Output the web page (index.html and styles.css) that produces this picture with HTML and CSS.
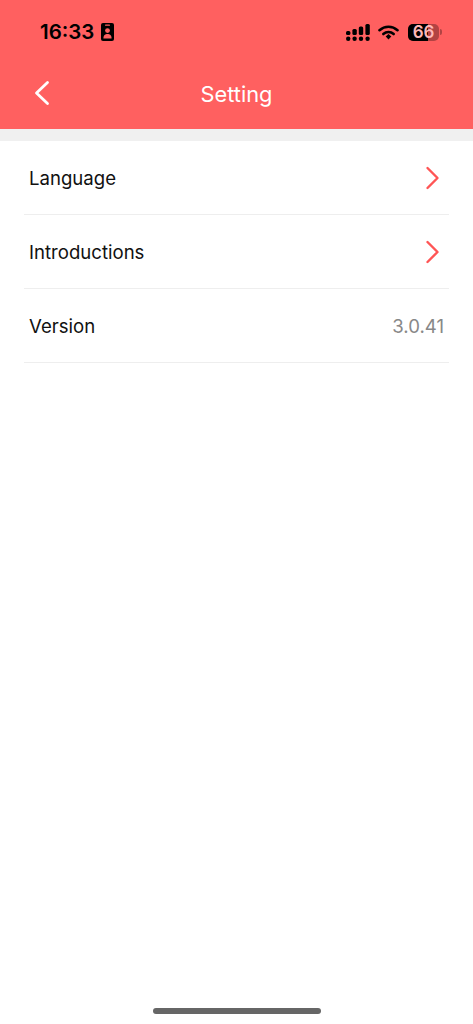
FILE: index.html
```html
<!DOCTYPE html>
<html lang="en">
<head>
  <meta charset="UTF-8">
  <meta name="viewport" content="width=device-width, initial-scale=1.0">
  <title>Setting</title>
  <link rel="stylesheet" href="styles.css">
</head>
<body>
  <div id="container">
    <div class="header">
      <div class="status-bar">
        <div class="status-left">
          <span class="time">16:33</span>
          <svg class="id-icon" width="13" height="18" viewBox="0 0 13 18">
            <rect x="0" y="0" width="13" height="18" rx="2" fill="#000"/>
            <rect x="4" y="1.6" width="5" height="1.2" rx="0.6" fill="#ff6060"/>
            <circle cx="6.5" cy="7.6" r="2.4" fill="#ff6060"/>
            <path d="M2.4 15.4 C2.4 12 4.3 11 6.5 11 C8.7 11 10.6 12 10.6 15.4 Z" fill="#ff6060"/>
          </svg>
        </div>
        <div class="status-right">
          <svg width="24" height="17" viewBox="0 0 24 17">
            <circle cx="2.2" cy="14.7" r="2.2" fill="#000"/>
            <circle cx="8.6" cy="14.7" r="2.2" fill="#000"/>
            <circle cx="15" cy="14.7" r="2.2" fill="#000"/>
            <circle cx="21.6" cy="14.7" r="2.2" fill="#000"/>
            <rect x="0" y="7" width="4.4" height="4" rx="1.5" fill="#000"/>
            <rect x="6.4" y="5" width="4.4" height="6" rx="1.5" fill="#000"/>
            <rect x="12.8" y="2.5" width="4.4" height="8.5" rx="1.5" fill="#000"/>
            <rect x="19.4" y="0" width="4.4" height="11" rx="1.5" fill="#000"/>
          </svg>
          <svg class="wifi" width="21" height="15" viewBox="0 0 21 15">
            <path d="M1.5 5.2 C6.6 0.6 14.4 0.6 19.5 5.2" fill="none" stroke="#000" stroke-width="2.6" stroke-linecap="round"/>
            <path d="M5.3 9 C8.3 6.4 12.7 6.4 15.7 9" fill="none" stroke="#000" stroke-width="2.6" stroke-linecap="round"/>
            <path d="M7.7 11.6 L10.5 8.9 L13.3 11.6 L10.5 14.6 Z" fill="#000"/>
          </svg>
          <div class="battery">
            <div class="battery-body">
              <div class="battery-fill" style="width: 66%"></div>
              <span class="battery-text">66</span>
            </div>
            <div class="battery-tip"></div>
          </div>
        </div>
      </div>
      <div class="nav-bar">
        <svg class="back" width="16" height="26" viewBox="0 0 16 26">
          <path d="M13.5 2.5 L2.5 13 L13.5 23.5" fill="none" stroke="#fff" stroke-width="2.8" stroke-linecap="round" stroke-linejoin="round"/>
        </svg>
        <span class="title">Setting</span>
      </div>
    </div>

    <ul class="list">
      <li>
        <span>Language</span>
        <svg class="arrow" width="16" height="24" viewBox="0 0 16 24">
          <path d="M2.5 2 L12.5 12 L2.5 22" fill="none" stroke="#ff5555" stroke-width="2.4" stroke-linecap="round" stroke-linejoin="round"/>
        </svg>
      </li>
      <li>
        <span>Introductions</span>
        <svg class="arrow" width="16" height="24" viewBox="0 0 16 24">
          <path d="M2.5 2 L12.5 12 L2.5 22" fill="none" stroke="#ff5555" stroke-width="2.4" stroke-linecap="round" stroke-linejoin="round"/>
        </svg>
      </li>
      <li>
        <span>Version</span>
        <span class="version">3.0.41</span>
      </li>
    </ul>

    <div class="home-bar"></div>
  </div>
</body>
</html>
```

FILE: styles.css
```css
body {
  font-family: Inter, "Liberation Sans", sans-serif;
  margin: 0;
  padding: 0;
  background-color: #fff;
}

#container {
  height: 1024px;
  display: flex;
  flex-direction: column;
  overflow: hidden;
}

.header {
  height: 129px;
  background-color: #ff6060;
  border-bottom: 12px solid #f0f0f0;
}

.status-bar {
  height: 64px;
  display: flex;
  justify-content: space-between;
  align-items: center;
  padding: 0 31px 0 40px;
}

.status-left,
.status-right {
  display: flex;
  align-items: center;
}

.time {
  font-size: 20.5px;
  font-weight: 600;
  color: #000;
  padding-bottom: 2px;
}

.id-icon {
  margin-left: 7px;
}

.wifi {
  margin-left: 8px;
}

.battery {
  display: flex;
  align-items: center;
  margin-left: 9px;
}

.battery-body {
  position: relative;
  width: 31px;
  height: 17px;
  border-radius: 5px;
  background-color: rgba(0, 0, 0, 0.3);
}

.battery-fill {
  height: 100%;
  border-radius: 5px 0 0 5px;
  background-color: #000;
}

.battery-text {
  position: absolute;
  top: 0;
  left: 0;
  right: 0;
  text-align: center;
  font-size: 17px;
  line-height: 17px;
  font-weight: 600;
  color: #ffb8b8;
}

.battery-tip {
  width: 2px;
  height: 6px;
  margin-left: 1px;
  border-radius: 0 2px 2px 0;
  background-color: rgba(0, 0, 0, 0.3);
}

.nav-bar {
  position: relative;
  height: 59px;
  display: flex;
  align-items: center;
  justify-content: center;
}

.back {
  position: absolute;
  left: 34px;
  top: 16px;
}

.title {
  font-size: 21.8px;
  color: #fff;
}

.list {
  list-style-type: none;
  margin: 0 24px;
  padding: 0;
}

.list li {
  height: 73px;
  padding: 0 5px;
  display: flex;
  justify-content: space-between;
  align-items: center;
  border-bottom: 1px solid #eee;
  font-size: 18.6px;
  line-height: 24px;
  color: #111;
}

.arrow {
  margin-right: 3px;
}

.version {
  color: #888;
}

.home-bar {
  width: 168px;
  height: 6px;
  margin: auto auto 10px;
  border-radius: 3px;
  background-color: #666;
}
```
